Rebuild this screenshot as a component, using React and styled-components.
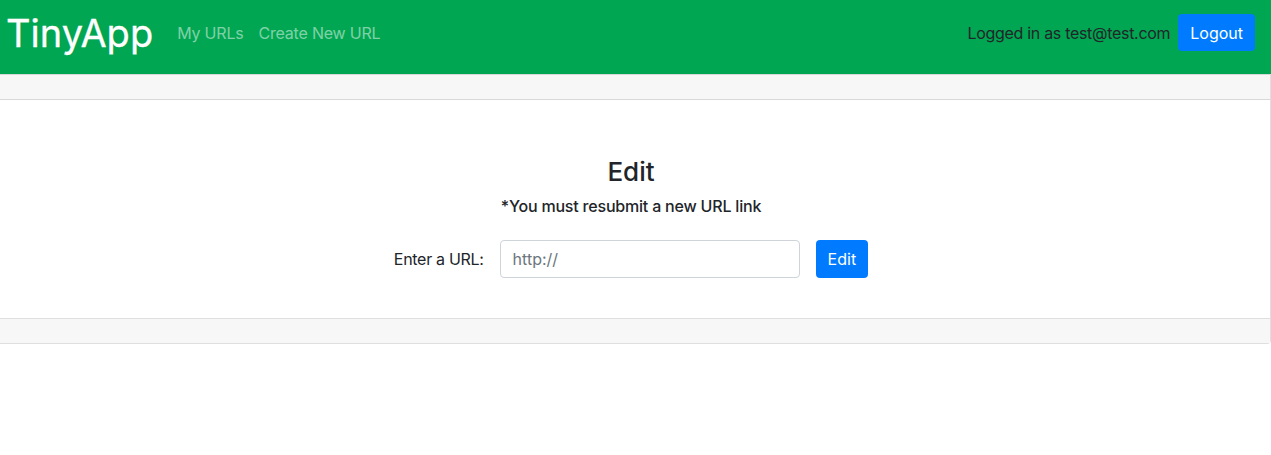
import React from "react";
import styled, { createGlobalStyle } from "styled-components";

const GlobalStyle = createGlobalStyle`
  body {
    margin: 0;
    font-family: Inter, "Liberation Sans", sans-serif;
    font-size: 16px;
    color: #212529;
    background: #ffffff;
  }
`;

const NavBar = styled.nav`
  height: 74px;
  box-sizing: border-box;
  display: flex;
  align-items: center;
  justify-content: space-between;
  padding: 0 16px 9px 6px;
  background-color: #00a651;
`;

const NavLeft = styled.div`
  display: flex;
  align-items: center;
`;

const Brand = styled.a`
  color: white;
  font-size: 38px;
  font-weight: 400;
  -webkit-text-stroke: 0.3px white;
  margin-right: 24px;
  text-decoration: none;
`;

const NavLink = styled.a`
  color: rgba(255, 255, 255, 0.5);
  font-size: 16px;
  margin-right: 15px;
  letter-spacing: -0.2px;
  text-decoration: none;
  cursor: pointer;
`;

const NavRight = styled.div`
  display: flex;
  align-items: center;
  gap: 8px;
`;

const UserText = styled.span`
  color: #212529;
  font-size: 16px;
  letter-spacing: -0.3px;
`;

const Button = styled.button`
  font-family: inherit;
  font-size: 16px;
  color: white;
  background-color: #007bff;
  border: 0;
  border-radius: 4px;
  height: ${(p) => p.h || 38}px;
  padding: 0 12px;
  cursor: pointer;
`;

const Card = styled.div`
  border: 1px solid rgba(0, 0, 0, 0.125);
  border-left: 0;
  border-top: 0;
  border-radius: 0 0 4px 0;
`;

const CardBand = styled.div`
  height: 24px;
  background-color: #f7f7f7;
  border-top: ${(p) => (p.top ? "1px solid rgba(0,0,0,0.125)" : "0")};
  border-bottom: ${(p) => (p.top ? "1px solid rgba(0,0,0,0.125)" : "0")};
`;

const CardBody = styled.div`
  height: 219px;
  box-sizing: border-box;
  padding: 56px 8px 0 0;
  display: flex;
  flex-direction: column;
  align-items: center;
  border-bottom: 1px solid rgba(0, 0, 0, 0.125);
`;

const Title = styled.h3`
  margin: 0;
  font-size: 26px;
  font-weight: 500;
  line-height: 1.2;
`;

const Note = styled.p`
  margin: 7px 0 0;
  font-size: 16px;
  font-weight: 500;
  letter-spacing: -0.2px;
  line-height: 24px;
`;

const FormRow = styled.form`
  display: flex;
  align-items: center;
  margin-top: 22px;
`;

const Label = styled.label`
  font-size: 16px;
  letter-spacing: -0.3px;
  margin-right: 16px;
`;

const Input = styled.input`
  width: 300px;
  height: 38px;
  box-sizing: border-box;
  border: 1px solid #ced4da;
  border-radius: 4px;
  padding: 0 12px;
  font-family: inherit;
  font-size: 16px;
  color: #495057;
  margin-right: 16px;
  &::placeholder {
    color: #6c757d;
  }
`;

export default function App() {
  return (
    <>
      <GlobalStyle />
      <NavBar>
        <NavLeft>
          <Brand>TinyApp</Brand>
          <NavLink>My URLs</NavLink>
          <NavLink>Create New URL</NavLink>
        </NavLeft>
        <NavRight>
          <UserText>Logged in as test@test.com</UserText>
          <Button h={37}>Logout</Button>
        </NavRight>
      </NavBar>
      <Card>
        <CardBand top />
        <CardBody>
          <Title>Edit</Title>
          <Note>*You must resubmit a new URL link</Note>
          <FormRow onSubmit={(e) => e.preventDefault()}>
            <Label>Enter a URL:</Label>
            <Input placeholder="http://" />
            <Button type="submit">Edit</Button>
          </FormRow>
        </CardBody>
        <CardBand />
      </Card>
    </>
  );
}
